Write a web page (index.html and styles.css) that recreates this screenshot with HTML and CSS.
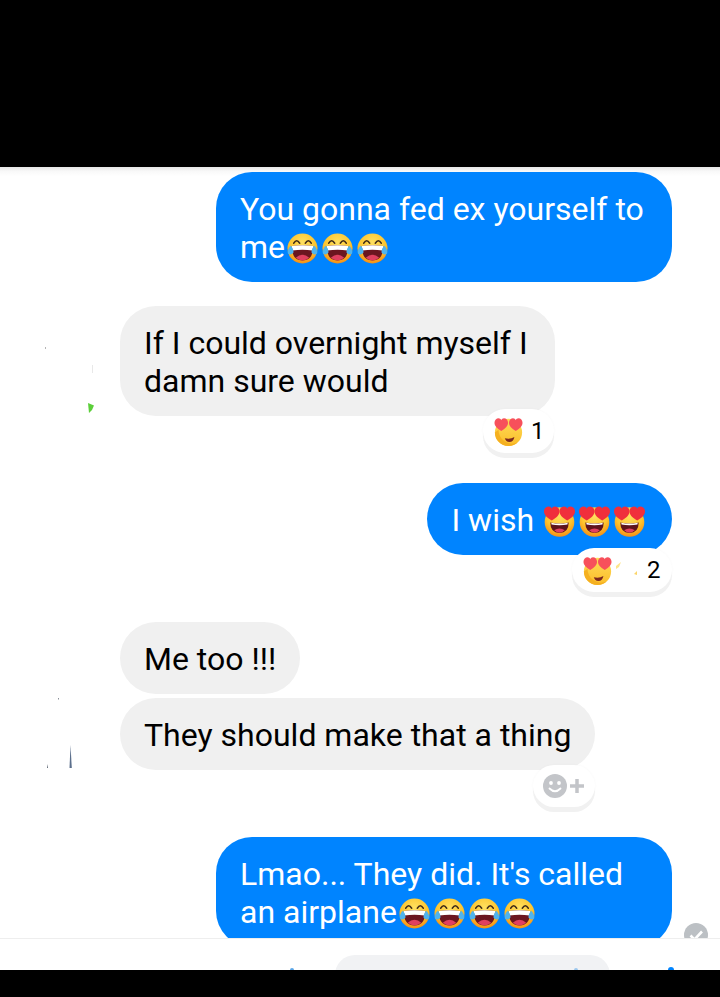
FILE: index.html
```html
<!DOCTYPE html>
<html lang="en">
<head>
<meta charset="utf-8">
<title>Chat</title>
<link rel="stylesheet" href="styles.css">
</head>
<body>
<svg class="defs" width="0" height="0" aria-hidden="true">
  <defs>
    <radialGradient id="face" cx="50%" cy="30%" r="72%">
      <stop offset="0" stop-color="#ffe060"/>
      <stop offset=".6" stop-color="#fdc52e"/>
      <stop offset="1" stop-color="#f58a12"/>
    </radialGradient>
    <linearGradient id="flat" x1="0" y1="0" x2="0" y2="1">
      <stop offset="0" stop-color="#fedc58"/>
      <stop offset="1" stop-color="#fbbd2a"/>
    </linearGradient>
    <symbol id="laugh" viewBox="0 0 32 32">
      <circle cx="16" cy="16" r="15.500" fill="url(#face)"/>
      <path d="M7 10.500Q10 5.500 13 10.500M19 10.500Q22 5.500 25 10.500" fill="none" stroke="#3f2a18" stroke-width="1.700" stroke-linecap="round"/>
      <path d="M5 13.500Q16 12 27 13.500Q27.500 28 16 28.500Q4.500 28 5 13.500Z" fill="#6b1620"/>
      <path d="M5 13.500Q16 12 27 13.500L26.500 18Q16 16.500 5.500 18Z" fill="#fff"/>
      <path d="M9 25.500Q16 19.500 23 25.500Q19.500 28.200 16 28.300Q12.500 28.200 9 25.500Z" fill="#e0405f"/>
      <path d="M4 13Q7.500 18 6.500 20.500Q4 23.500 1.200 21.500Q-.5 18.500 4 13Z" fill="#4fb4ee"/>
      <path d="M28 13Q24.500 18 25.500 20.500Q28 23.500 30.800 21.500Q32.500 18.500 28 13Z" fill="#4fb4ee"/>
    </symbol>
    <symbol id="hearts" viewBox="0 0 32 32">
      <circle cx="16" cy="16.500" r="15.300" fill="url(#face)"/>
      <path d="M6.500 17Q16 19 25.500 17Q25.500 27.500 16 27.800Q6.500 27.500 6.500 17Z" fill="#5e141c"/>
      <path d="M7.500 17.200Q16 19 24.500 17.200L24.200 19Q16 20.500 7.800 19Z" fill="#fff"/>
      <path d="M10.500 25Q16 21.500 21.500 25Q19 27.500 16 27.600Q13 27.500 10.500 25Z" fill="#e2405f"/>
      <path d="M8 15C3.500 12.500 0 9.500 0 5.500C0 2.500 2.300 .5 4.800 .5C6.300 .5 7.500 1.300 8 2.500C8.500 1.300 9.700 .5 11.200 .5C13.700 .5 16 2.500 16 5.500C16 9.500 12.500 12.500 8 15Z" fill="#f02f3c"/>
      <path d="M24 15C19.500 12.500 16 9.500 16 5.500C16 2.500 18.300 .5 20.800 .5C22.300 .5 23.500 1.300 24 2.500C24.500 1.300 25.700 .5 27.200 .5C29.700 .5 32 2.500 32 5.500C32 9.500 28.500 12.500 24 15Z" fill="#f02f3c"/>
    </symbol>
    <symbol id="hearts-small" viewBox="0 0 32 32">
      <circle cx="16" cy="17" r="15" fill="url(#flat)"/>
      <path d="M1 17A15 15 0 0 0 16 32A15 15 0 0 0 26 28.200A15 15 0 0 1 5 14Z" fill="#f5b020"/>
      <path d="M12 23.500Q18 25 22.500 22Q21.500 27.500 17 27.500Q13 27.500 12 23.500Z" fill="#7d2a1f"/>
      <path d="M8 15.500C3 12.500 .5 9.500 .5 6.500C.5 3.500 2.800 1.500 5 1.500C6.300 1.500 7.500 2.300 8 3.500C8.500 2.300 9.700 1.500 11 1.500C13.500 1.500 15.500 3.500 15.500 6.500C15.500 9.500 13 12.500 8 15.500Z" fill="#f7505b"/>
      <path d="M24 15.500C19 12.500 16.500 9.500 16.500 6.500C16.500 3.500 18.800 1.500 21 1.500C22.300 1.500 23.500 2.300 24 3.500C24.500 2.300 25.700 1.500 27 1.500C29.500 1.500 31.500 3.500 31.500 6.500C31.500 9.500 29 12.500 24 15.500Z" fill="#f7505b"/>
    </symbol>
  </defs>
</svg>

<header class="top-bar"></header>

<main class="thread">
  <div class="row row-out">
    <p class="bubble bubble-out bubble-wide">You gonna fed ex yourself to me<svg class="emoji"><use href="#laugh"/></svg><svg class="emoji"><use href="#laugh"/></svg><svg class="emoji"><use href="#laugh"/></svg></p>
  </div>

  <div class="row row-in">
    <svg class="avatar" viewBox="0 0 80 110" preserveAspectRatio="xMinYMin" aria-hidden="true">
      <rect x="5" y="41" width="1" height="2" fill="#b5b5b5"/>
      <rect x="52" y="59" width="1" height="8" fill="#e8e8e8"/>
      <path d="M48 97L54 99.500L52 104L49 107Z" fill="#5ccf3a"/>
    </svg>
    <div class="stack">
      <p class="bubble bubble-in">If I could overnight myself I damn sure would</p>
      <div class="pill pill-love"><svg class="pill-emoji"><use href="#hearts-small"/></svg><span>1</span></div>
    </div>
  </div>

  <div class="row row-out">
    <div class="stack">
      <p class="bubble bubble-out bubble-wish">I wish <svg class="emoji"><use href="#hearts"/></svg><svg class="emoji"><use href="#hearts"/></svg><svg class="emoji"><use href="#hearts"/></svg></p>
      <div class="pill pill-two">
        <svg class="pill-emoji"><use href="#hearts-small"/></svg>
        <svg class="slivers" viewBox="0 0 26 16" aria-hidden="true">
          <path d="M2 4L7 0L5 5L2 7Z" fill="#fde58a"/>
          <path d="M20 12L23 9L23 13Z" fill="#fbd56a"/>
        </svg>
        <span>2</span>
      </div>
    </div>
  </div>

  <div class="row row-in">
    <svg class="avatar" viewBox="0 0 80 148" preserveAspectRatio="xMinYMin" aria-hidden="true">
      <rect x="18" y="76" width="1" height="1.500" fill="#8a8f98"/>
      <path d="M7 146L7.500 142L8 146Z" fill="#56606e"/>
      <path d="M29.500 146L30.500 123L31.800 146Z" fill="#5b6f8c"/>
    </svg>
    <div class="stack">
      <p class="bubble bubble-in">Me too !!!</p>
      <p class="bubble bubble-in bubble-next">They should make that a thing</p>
      <div class="pill pill-add">
        <svg class="add-face" viewBox="0 0 24 24" aria-hidden="true">
          <circle cx="12" cy="12" r="12" fill="#c3c5c9"/>
          <circle cx="8" cy="9" r="1.900" fill="#fff"/>
          <circle cx="16" cy="9" r="1.900" fill="#fff"/>
          <path d="M6.500 14.500Q12 20 17.500 14.500" fill="none" stroke="#fff" stroke-width="1.800" stroke-linecap="round"/>
        </svg>
        <svg class="add-plus" viewBox="0 0 14 14" aria-hidden="true">
          <path d="M7 0V14M0 7H14" stroke="#c3c5c9" stroke-width="3.500"/>
        </svg>
      </div>
    </div>
  </div>

  <div class="row row-out row-last">
    <p class="bubble bubble-out bubble-wide">Lmao... They did. It's called an airplane<svg class="emoji"><use href="#laugh"/></svg><svg class="emoji"><use href="#laugh"/></svg><svg class="emoji"><use href="#laugh"/></svg><svg class="emoji"><use href="#laugh"/></svg></p>
    <svg class="status" viewBox="0 0 24 24" aria-hidden="true">
      <circle cx="12" cy="12" r="12" fill="#bcc0c4"/>
      <path d="M6.500 12.500L10.500 16.500L18 8.500" fill="none" stroke="#fff" stroke-width="2.600"/>
    </svg>
  </div>
</main>

<footer class="composer">
  <span class="speck"></span>
  <div class="composer-input"><span class="speck speck-inner"></span></div>
  <span class="speck speck-right"></span>
</footer>

<div class="bottom-bar"></div>
</body>
</html>
```

FILE: styles.css
```css
* {
  box-sizing: border-box;
}

html,
body {
  margin: 0;
  height: 997px;
  overflow: hidden;
}

body {
  display: flex;
  flex-direction: column;
  background: #fff;
  font-family: Roboto, "Liberation Sans", sans-serif;
}

.defs {
  display: block;
  flex: none;
}

.top-bar {
  flex: none;
  height: 167px;
  background: #000;
}

.bottom-bar {
  flex: none;
  height: 27px;
  background: #000;
}

.thread {
  flex: none;
  height: 771px;
  padding-top: 5px;
  overflow: hidden;
  display: flex;
  flex-direction: column;
  background: linear-gradient(#e6e6e6, #f8f8f8 4px, #fff 9px);
}

.row {
  display: flex;
  flex: none;
  margin-bottom: 24px;
}

.row-out {
  justify-content: flex-end;
  padding-right: 48px;
}

.row-in {
  padding-left: 40px;
}

.row-last {
  padding-right: 12px;
  gap: 12px;
  align-items: flex-end;
}

.avatar {
  flex: none;
  width: 80px;
  align-self: stretch;
  height: auto;
}

.stack {
  display: flex;
  flex-direction: column;
  align-items: flex-end;
}

.stack .bubble-in {
  align-self: flex-start;
}

.bubble {
  margin: 0;
  padding: 18px 24px 16px;
  font-size: 32px;
  line-height: 38px;
  border-radius: 36px;
}

.bubble-out {
  background: #0084ff;
  color: #fff;
}

.bubble-in {
  background: #f0f0f0;
  color: #000;
  max-width: 435px;
}

.bubble-wide {
  width: 456px;
}

.bubble-wish {
  padding-right: 25px;
}

.bubble-next {
  margin-top: 4px;
  max-width: none;
}

.emoji {
  width: 31px;
  height: 31px;
  margin: 0 2px;
  vertical-align: -6px;
}

.pill {
  position: relative;
  z-index: 1;
  display: flex;
  align-items: center;
  height: 44px;
  border-radius: 22px;
  background: #fff;
  box-shadow: 0 5px 0 #f1f1f1, 0 0 3px rgba(0, 0, 0, .03);
  font-size: 24px;
  color: #000;
}

.pill-love {
  width: 71px;
  margin: -7px 1px 6px 0;
  padding-left: 11px;
  gap: 8px;
}

.pill-two {
  width: 100px;
  margin: -7px 0 6px 0;
  padding-left: 11px;
}

.pill-two span {
  margin-left: 7px;
}

.pill-emoji {
  flex: none;
  width: 29px;
  height: 29px;
}

.slivers {
  flex: none;
  width: 26px;
  height: 16px;
  margin-left: 2px;
}

.pill-add {
  width: 62px;
  margin: -5px 0 6px 0;
  padding-left: 10px;
  height: 42px;
  gap: 3px;
}

.add-face {
  flex: none;
  width: 24px;
  height: 24px;
}

.add-plus {
  flex: none;
  width: 14px;
  height: 14px;
}

.status {
  flex: none;
  width: 24px;
  height: 24px;
}

.composer {
  flex: none;
  height: 32px;
  padding: 16px 0 0 290px;
  display: flex;
  gap: 41px;
  overflow: hidden;
  border-top: 1px solid #eeeeee;
  background: #fff;
}

.composer-input {
  flex: none;
  width: 275px;
  height: 40px;
  padding: 13px 0 0 239px;
  border-radius: 24px;
  background: #f1f2f4;
}

.speck {
  display: block;
  flex: none;
  width: 4px;
  height: 4px;
  margin-top: 13px;
  border-radius: 50%;
  background: #5aa6e8;
}

.speck-inner {
  margin-top: 0;
  background: #9cc8ee;
}

.speck-right {
  margin: 12px 0 0 17px;
  width: 6px;
  height: 6px;
  background: #0084ff;
}
```
